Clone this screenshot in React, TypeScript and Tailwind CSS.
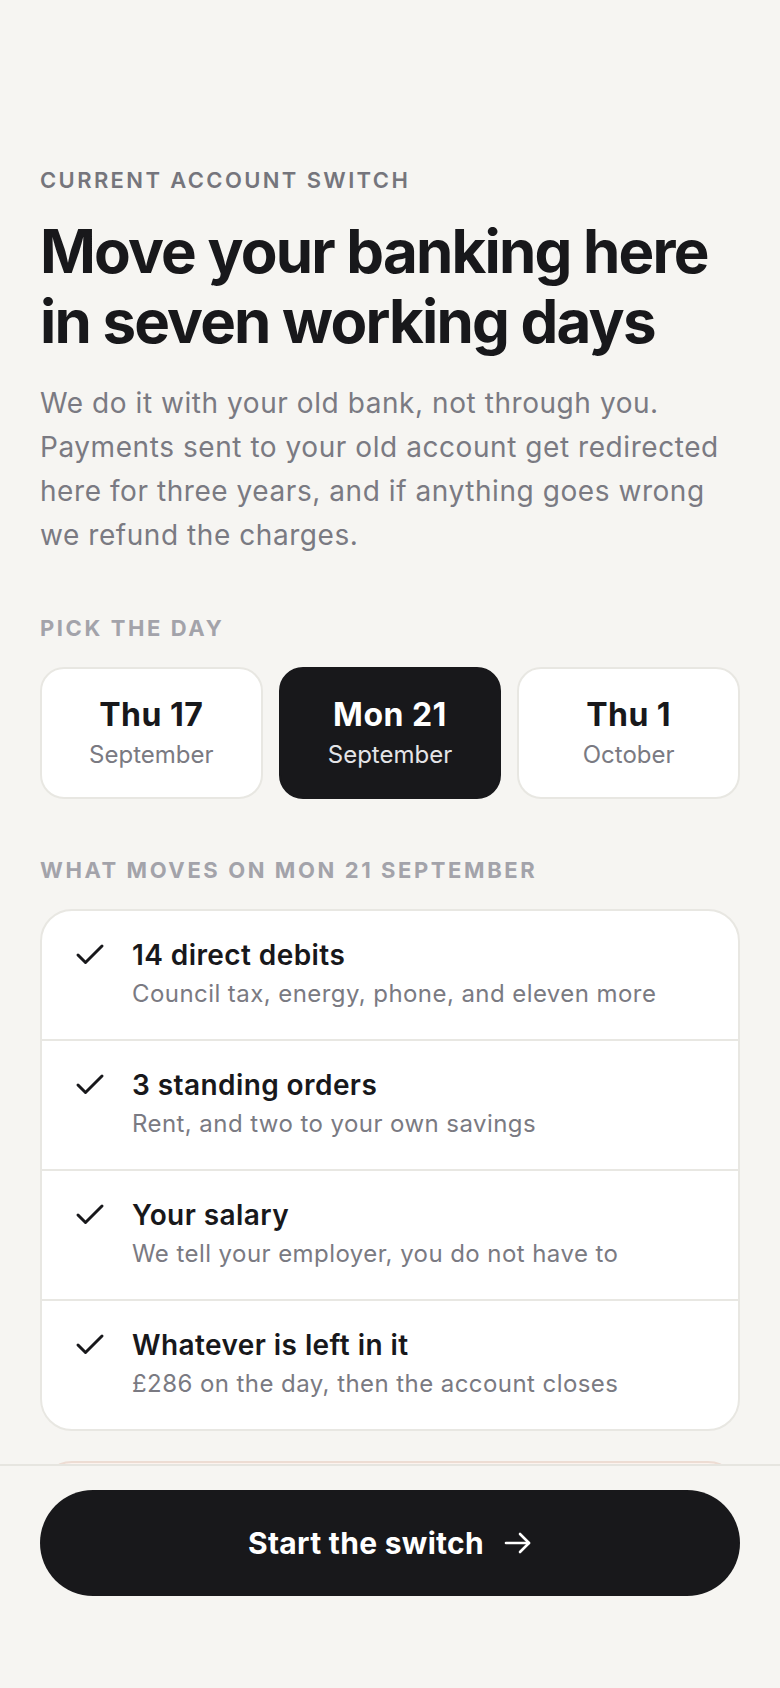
import React from "react";

const days = [
  { day: "Thu 17", month: "September", selected: false },
  { day: "Mon 21", month: "September", selected: true },
  { day: "Thu 1", month: "October", selected: false },
];

const moves = [
  { title: "14 direct debits", sub: "Council tax, energy, phone, and eleven more" },
  { title: "3 standing orders", sub: "Rent, and two to your own savings" },
  { title: "Your salary", sub: "We tell your employer, you do not have to" },
  { title: "Whatever is left in it", sub: "£286 on the day, then the account closes" },
];

function CheckIcon() {
  return (
    <svg width="36" height="36" viewBox="0 0 24 24" fill="none" stroke="#18181b" strokeWidth="2" strokeLinecap="round" strokeLinejoin="round" className="shrink-0 -mt-[2px]">
      <path d="M20 6 9 17l-5-5" />
    </svg>
  );
}

function ArrowIcon() {
  return (
    <svg width="28" height="22" viewBox="0 0 28 22" fill="none" stroke="#ffffff" strokeWidth="2.6" strokeLinecap="round" strokeLinejoin="round" className="shrink-0">
      <path d="M2 11h23" />
      <path d="M16 2l9 9-9 9" />
    </svg>
  );
}

export default function App() {
  return (
    <div className="min-h-screen bg-[#f6f5f2] font-['Inter',sans-serif] text-[#18181b]">
      <main className="px-[40px] pt-[165px] pb-[300px]">
        <p className="text-[22px] leading-[30px] font-semibold tracking-[0.108em] text-[#75757c]">
          CURRENT ACCOUNT SWITCH
        </p>
        <h1 className="mt-[21px] text-[60px] leading-[70px] font-bold tracking-[-0.03em] text-[#18181b]">
          Move your banking here in seven working days
        </h1>
        <p className="mt-[25px] text-[28px] leading-[44px] tracking-[0.02em] text-[#7a7a82]">
          We do it with your old bank, not through you. Payments sent to your old account get redirected here for three years, and if anything goes wrong we refund the charges.
        </p>

        <p className="mt-[56px] text-[22px] leading-[30px] font-bold tracking-[0.118em] text-[#a3a3aa]">
          PICK THE DAY
        </p>
        <div className="mt-[24px] grid grid-cols-3 gap-[16px]">
          {days.map((d) => (
            <button
              key={d.day}
              className={
                d.selected
                  ? "h-[132px] rounded-[24px] border-2 border-[#18181b] bg-[#18181b] flex flex-col items-center justify-center"
                  : "h-[132px] rounded-[24px] border-2 border-[#e8e7e2] bg-white flex flex-col items-center justify-center"
              }
            >
              <span className={d.selected ? "text-[32px] leading-[38px] font-bold tracking-[0.015em] text-white" : "text-[32px] leading-[38px] font-bold tracking-[0.015em] text-[#18181b]"}>
                {d.day}
              </span>
              <span className={d.selected ? "mt-[6px] text-[24px] leading-[30px] text-[#e4e4e7]" : "mt-[6px] text-[24px] leading-[30px] text-[#7a7a82]"}>
                {d.month}
              </span>
            </button>
          ))}
        </div>

        <p className="mt-[56px] text-[22px] leading-[30px] font-bold tracking-[0.118em] text-[#a3a3aa]">
          WHAT MOVES ON MON 21 SEPTEMBER
        </p>
        <div className="mt-[24px] rounded-[32px] border-2 border-[#e8e7e2] bg-white overflow-hidden">
          {moves.map((m, i) => (
            <div
              key={m.title}
              className={
                i === 0
                  ? "flex items-start gap-[24px] pl-[30px] pr-[30px] pt-[28px] pb-[29px]"
                  : "flex items-start gap-[24px] pl-[30px] pr-[30px] pt-[28px] pb-[29px] border-t-2 border-[#e8e7e2]"
              }
            >
              <CheckIcon />
              <div className="flex flex-col">
                <span className="text-[28px] leading-[32px] font-semibold tracking-[0.015em] text-[#18181b]">{m.title}</span>
                <span className="mt-[7px] text-[24px] leading-[32px] tracking-[0.018em] text-[#7a7a82]">{m.sub}</span>
              </div>
            </div>
          ))}
        </div>

        <div className="mt-[30px] rounded-[32px] border-2 border-[#eddcd3] bg-[#fcf3ee] px-[30px] py-[28px]">
          <p className="text-[28px] leading-[32px] font-semibold text-[#18181b]">Your old card stops on the day</p>
          <p className="mt-[7px] text-[24px] leading-[32px] text-[#7a7a82]">Use your new card from the moment it arrives</p>
        </div>
      </main>

      <footer className="fixed inset-x-0 bottom-0 border-t-2 border-[#e6e5e0] bg-[#f6f5f2] px-[40px] pt-[24px] pb-[92px]">
        <button className="flex h-[106px] w-full items-center justify-center gap-[20px] rounded-full bg-[#18181b]">
          <span className="text-[30px] font-bold tracking-[0.01em] text-white">Start the switch</span>
          <ArrowIcon />
        </button>
      </footer>
    </div>
  );
}
